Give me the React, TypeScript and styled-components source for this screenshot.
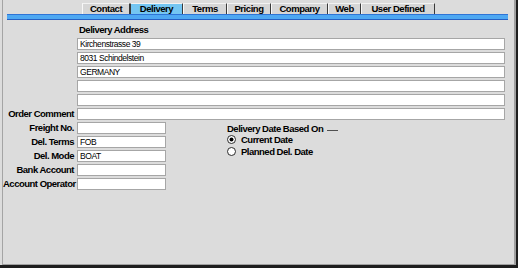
import { Fragment } from 'react'
import styled, { createGlobalStyle } from 'styled-components'

const GlobalStyle = createGlobalStyle`
  html, body {
    margin: 0;
    padding: 0;
    background: #dcdcdc;
  }
  * {
    box-sizing: border-box;
  }
`

const Frame = styled.div`
  width: 518px;
  height: 268px;
  padding-left: 2px;
  background: #dcdcdc;
  border-right: 2px solid #1e1e1e;
  border-bottom: 3px solid #1e1e1e;
  font-family: 'Liberation Sans', Arial, sans-serif;
  color: #000;
`

const Panel = styled.div`
  height: 100%;
  border-left: 1px solid #a4a4a4;
  border-right: 2px solid #a0a0a0;
  border-bottom: 1px solid #a0a0a0;
  display: flex;
  flex-direction: column;
`

const TabStrip = styled.div`
  display: flex;
  padding: 3px 0 0 79px;
  height: 14px;
`

const Tab = styled.div<{ $w: number; $active?: boolean }>`
  width: ${(p) => p.$w}px;
  height: 11px;
  background: ${(p) => (p.$active ? '#74c6f2' : '#d6d6d6')};
  border-top: 1px solid #f2f2f2;
  border-left: 1px solid ${(p) => (p.$active ? '#3a3a3a' : '#f8f8f8')};
  border-right: 1px solid #3a3a3a;
  display: flex;
  align-items: center;
  justify-content: center;
  font-size: 9.5px;
  font-weight: bold;
  letter-spacing: -0.45px;
  line-height: 10px;
`

const BlueBar = styled.div`
  height: 6px;
  margin: 0 6px 0 4px;
  background: #4ea8f2;
  border-top: 1px solid #2f74d6;
  border-bottom: 1px solid #2660c4;
`

const Form = styled.div`
  padding-top: 4px;
  display: flex;
  flex-direction: column;
  gap: 2px;
`

const Grid = styled.div<{ $field: number }>`
  display: grid;
  grid-template-columns: 71px ${(p) => p.$field}px;
  grid-auto-rows: 12px;
  column-gap: 3px;
  row-gap: 2px;
`

const Label = styled.div`
  font-size: 9.5px;
  font-weight: bold;
  letter-spacing: -0.5px;
  line-height: 12px;
  text-align: right;
  white-space: nowrap;
`

const Heading = styled.div`
  grid-column: 2;
  padding-left: 2px;
  font-size: 9.5px;
  font-weight: bold;
  letter-spacing: -0.5px;
  line-height: 12px;
`

const Field = styled.div`
  grid-column: 2;
  background: #fff;
  border: 1px solid #a6a6a6;
  padding-left: 2px;
  font-size: 8.5px;
  letter-spacing: -0.45px;
  line-height: 10px;
  white-space: nowrap;
  overflow: hidden;
`

const Lower = styled.div`
  display: flex;
  align-items: flex-start;
`

const RadioGroup = styled.div`
  margin-left: 61px;
  display: flex;
  flex-direction: column;
`

const GroupTitle = styled.div`
  height: 12px;
  display: flex;
  align-items: center;
  font-size: 9.5px;
  font-weight: bold;
  letter-spacing: -0.5px;
`

const TitleRule = styled.span`
  width: 11px;
  height: 1px;
  margin: 8px 0 0 4px;
  background: #505050;
  align-self: flex-start;
`

const RadioRow = styled.div`
  height: 11.5px;
  display: flex;
  align-items: center;
  gap: 5px;
  font-size: 9.5px;
  font-weight: bold;
  letter-spacing: -0.5px;
`

const tabs = [
  { label: 'Contact', w: 48 },
  { label: 'Delivery', w: 53, active: true },
  { label: 'Terms', w: 44 },
  { label: 'Pricing', w: 44 },
  { label: 'Company', w: 57 },
  { label: 'Web', w: 33 },
  { label: 'User Defined', w: 74 },
]

const address = ['Kirchenstrasse 39', '8031 Schindelstein', 'GERMANY', '', '']

const details = [
  { label: 'Freight No.', value: '' },
  { label: 'Del. Terms', value: 'FOB' },
  { label: 'Del. Mode', value: 'BOAT' },
  { label: 'Bank Account', value: '' },
  { label: 'Account Operator', value: '' },
]

function Radio({ checked }: { checked?: boolean }) {
  return (
    <svg width="9" height="9" viewBox="0 0 9 9">
      <circle cx="4.5" cy="4.5" r="4" fill="#fff" stroke="#2a2a2a" strokeWidth="1" />
      {checked && <circle cx="4.5" cy="4.5" r="2" fill="#000" />}
    </svg>
  )
}

export default function App() {
  return (
    <>
      <GlobalStyle />
      <Frame>
        <Panel>
          <TabStrip>
            {tabs.map((t) => (
              <Tab key={t.label} $w={t.w} $active={t.active}>
                {t.label}
              </Tab>
            ))}
          </TabStrip>
          <BlueBar />
          <Form>
            <Grid $field={428}>
              <Heading>Delivery Address</Heading>
              {address.map((line, i) => (
                <Field key={i}>{line}</Field>
              ))}
              <Label>Order Comment</Label>
              <Field />
            </Grid>
            <Lower>
              <Grid $field={89}>
                {details.map((d) => (
                  <Fragment key={d.label}>
                    <Label>{d.label}</Label>
                    <Field>{d.value}</Field>
                  </Fragment>
                ))}
              </Grid>
              <RadioGroup>
                <GroupTitle>
                  Delivery Date Based On
                  <TitleRule />
                </GroupTitle>
                <RadioRow>
                  <Radio checked />
                  Current Date
                </RadioRow>
                <RadioRow>
                  <Radio />
                  Planned Del. Date
                </RadioRow>
              </RadioGroup>
            </Lower>
          </Form>
        </Panel>
      </Frame>
    </>
  )
}
